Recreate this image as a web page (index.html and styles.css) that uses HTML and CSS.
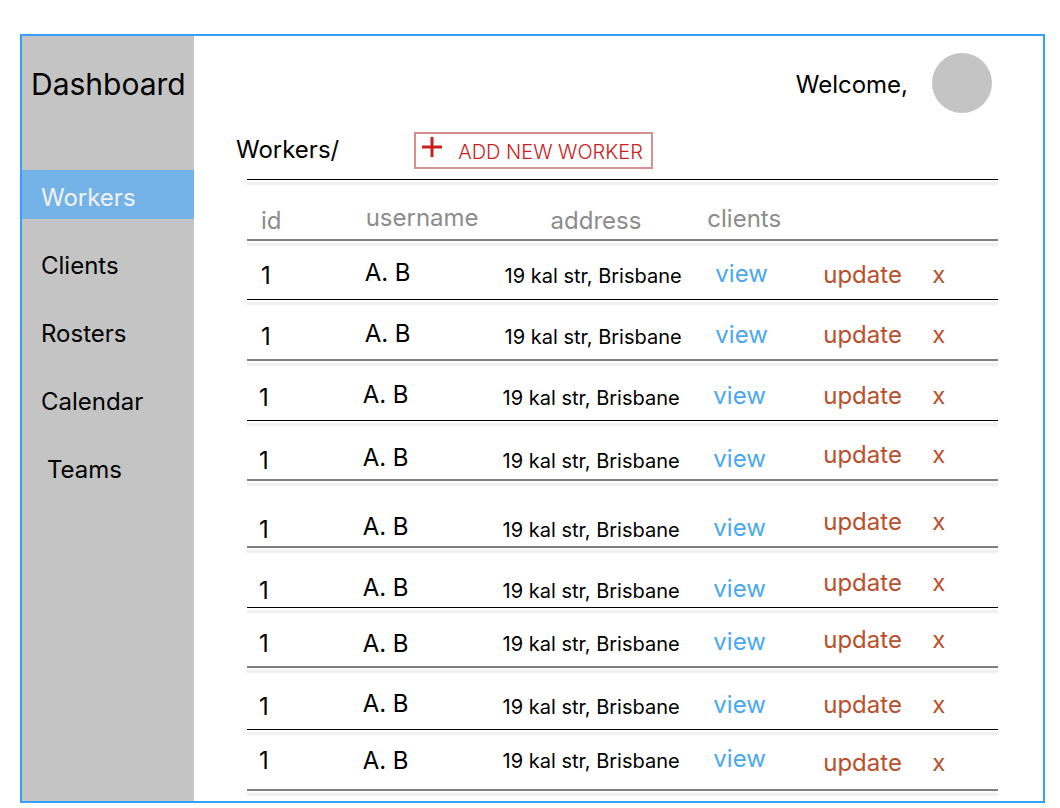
FILE: index.html
```
<!DOCTYPE html>
<html lang="en">
<head>
<meta charset="utf-8">
<title>Dashboard</title>
<link rel="stylesheet" href="styles.css">
</head>
<body>
<div class="frame">
  <aside class="sidebar">
    <h1 class="brand">Dashboard</h1>
    <nav class="nav">
      <a class="nav-link nav-link-active" href="#workers">Workers</a>
      <a class="nav-link" href="#clients">Clients</a>
      <a class="nav-link" href="#rosters">Rosters</a>
      <a class="nav-link" href="#calendar">Calendar</a>
      <a class="nav-link nav-link-indent" href="#teams">Teams</a>
    </nav>
  </aside>
  <main class="main">
    <header class="topbar">
      <span class="welcome">Welcome,</span>
      <span class="avatar"></span>
    </header>
    <div class="heading">
      <h2 class="title">Workers/</h2>
      <button class="add" type="button">
        <svg class="plus" viewBox="0 0 20 20" aria-hidden="true"><path d="M10 0V20M0 10H20" stroke="currentColor" stroke-width="3"/></svg>
        <span>ADD NEW WORKER</span>
      </button>
    </div>
    <div class="table-wrap">
      <table class="workers">
        <colgroup><col class="col-id"><col class="col-name"><col class="col-address"><col class="col-clients"><col class="col-update"><col></colgroup>
        <thead>
          <tr class="soft roomy"><th class="h-id">id</th><th class="h-name">username</th><th class="h-address">address</th><th class="h-clients">clients</th><td></td><td></td></tr>
        </thead>
        <tbody>
          <tr class="shifted short"><td class="id">1</td><td class="name">A. B</td><td class="address">19 kal str, Brisbane</td><td class="view"><a href="#view">view</a></td><td class="action"><button type="button">update</button></td><td class="action"><button type="button">x</button></td></tr>
          <tr class="shifted soft roomy"><td class="id">1</td><td class="name">A. B</td><td class="address">19 kal str, Brisbane</td><td class="view"><a href="#view">view</a></td><td class="action"><button type="button">update</button></td><td class="action"><button type="button">x</button></td></tr>
          <tr><td class="id">1</td><td class="name">A. B</td><td class="address">19 kal str, Brisbane</td><td class="view"><a href="#view">view</a></td><td class="action"><button type="button">update</button></td><td class="action"><button type="button">x</button></td></tr>
          <tr class="soft low"><td class="id">1</td><td class="name">A. B</td><td class="address">19 kal str, Brisbane</td><td class="view"><a href="#view">view</a></td><td class="action"><button type="button">update</button></td><td class="action"><button type="button">x</button></td></tr>
          <tr class="soft lowest tall"><td class="id">1</td><td class="name">A. B</td><td class="address">19 kal str, Brisbane</td><td class="view"><a href="#view">view</a></td><td class="action"><button type="button">update</button></td><td class="action"><button type="button">x</button></td></tr>
          <tr class="lowest"><td class="id">1</td><td class="name">A. B</td><td class="address">19 kal str, Brisbane</td><td class="view"><a href="#view">view</a></td><td class="action"><button type="button">update</button></td><td class="action"><button type="button">x</button></td></tr>
          <tr class="soft level"><td class="id">1</td><td class="name">A. B</td><td class="address">19 kal str, Brisbane</td><td class="view"><a href="#view">view</a></td><td class="action"><button type="button">update</button></td><td class="action"><button type="button">x</button></td></tr>
          <tr class="medium"><td class="id">1</td><td class="name">A. B</td><td class="address">19 kal str, Brisbane</td><td class="view"><a href="#view">view</a></td><td class="action"><button type="button">update</button></td><td class="action"><button type="button">x</button></td></tr>
          <tr class="soft level high roomy"><td class="id">1</td><td class="name">A. B</td><td class="address">19 kal str, Brisbane</td><td class="view"><a href="#view">view</a></td><td class="action"><button type="button">update</button></td><td class="action"><button type="button">x</button></td></tr>
        </tbody>
      </table>
    </div>
  </main>
</div>
</body>
</html>
```

FILE: styles.css
```
* {
  box-sizing: border-box;
}

body {
  margin: 0;
  padding: 34px 15px 4px 20px;
  background: #fff;
  color: #000;
  font-family: Inter, "Liberation Sans", sans-serif;
  font-size: 24px;
  font-weight: 400;
  font-optical-sizing: none;
  line-height: 30px;
}

a {
  color: inherit;
  text-decoration: none;
}

button {
  margin: 0;
  padding: 0;
  border: 0;
  background: none;
  color: inherit;
  font: inherit;
  font-optical-sizing: inherit;
  cursor: pointer;
}

.frame {
  display: flex;
  border: 2px solid #369eff;
}

.sidebar {
  flex: 0 0 172px;
  background: #c4c4c4;
}

.brand {
  margin: 0;
  padding: 28px 0 66px 9px;
  font-size: 30px;
  font-weight: 400;
  line-height: 40px;
}

.nav {
  display: flex;
  flex-direction: column;
  gap: 19px;
}

.nav-link {
  padding: 13px 0 6px 19px;
}

.nav-link-active {
  background: #74b3e7;
  color: #f2f2f2;
}

.nav-link-indent {
  padding-left: 25px;
}

.main {
  flex: 1;
  min-width: 0;
  padding: 17px 0 2px;
}

.topbar {
  display: flex;
  align-items: center;
  justify-content: flex-end;
  gap: 24px;
  padding-right: 51px;
}

.welcome {
  padding-top: 4px;
}

.avatar {
  width: 60px;
  height: 60px;
  border-radius: 50%;
  background: #c4c4c4;
}

.heading {
  display: flex;
  gap: 75px;
  margin: 19px 0 10px 42px;
}

.title {
  margin: 3px 0 0;
  font-size: 24px;
  font-weight: 400;
}

.add {
  display: flex;
  align-items: flex-start;
  gap: 16px;
  height: 37px;
  padding: 3px 8px 0 6px;
  border: 2px solid #d59090;
  color: #c8201c;
  font-size: 20px;
  font-weight: 300;
}

.plus {
  width: 20px;
  height: 20px;
}

.table-wrap {
  margin: 0 45px 0 53px;
}

.table-wrap::after {
  display: block;
  height: 8px;
  background: linear-gradient(transparent 1px, #eee 3px, #eee 4px, transparent 6px);
  content: "";
}

.workers {
  width: 100%;
  border-top: 1px solid #000;
  border-spacing: 0;
  table-layout: fixed;
}

.col-id { width: 15.4%; }
.col-name { width: 18.5%; }
.col-address { width: 28.2%; }
.col-clients { width: 14.5%; }
.col-update { width: 14.5%; }

.workers tr {
  --base: 7px;
  --shift: 0px;
  --action: 9px;
  height: 60px;
  background: linear-gradient(transparent 1px, #eee 3px, #eee 4px, transparent 6px);
}

.workers th,
.workers td {
  padding: 0;
  border-bottom: 1px solid #000;
  font-weight: 400;
  text-align: left;
  vertical-align: bottom;
  white-space: nowrap;
}

.workers .soft > * {
  border-bottom: 2px solid #808080;
}

.workers th {
  color: #8c8c8c;
}

.workers .h-id { padding: 0 0 3px 14px; }
.workers .h-name { padding: 0 0 6px 3px; }
.workers .h-address { padding: 0 0 3px 49px; }
.workers .h-clients { padding: 0 0 5px; }

/* the clients heading starts a little left of its links */
.h-clients { text-indent: -6px; }

.workers .id {
  padding: 0 0 var(--base) calc(12px + var(--shift));
}

.workers .name {
  padding: 0 0 calc(var(--base) + 3px) var(--shift);
}

.workers .level .name {
  padding-bottom: var(--base);
}

.workers .address {
  padding: 0 0 var(--base) calc(1px + var(--shift));
  font-size: 20px;
}

.workers .view {
  padding: 0 0 calc(var(--base) + 2px) var(--shift);
  color: #4aa8ef;
}

.workers .action {
  padding: 0 0 var(--action) 1px;
  color: #b9502b;
}

.action button {
  display: block;
}

.workers .shifted { --shift: 2px; }
.workers .low { --base: 3px; }
.workers .lowest { --base: 1px; }
.workers .level { --action: 11px; }
.workers .high { --base: 13px; }
.workers .short { --base: 8px; height: 59px; }
.workers .roomy { height: 61px; }
.workers .medium { height: 62px; }
.workers .tall { height: 67px; }
```
